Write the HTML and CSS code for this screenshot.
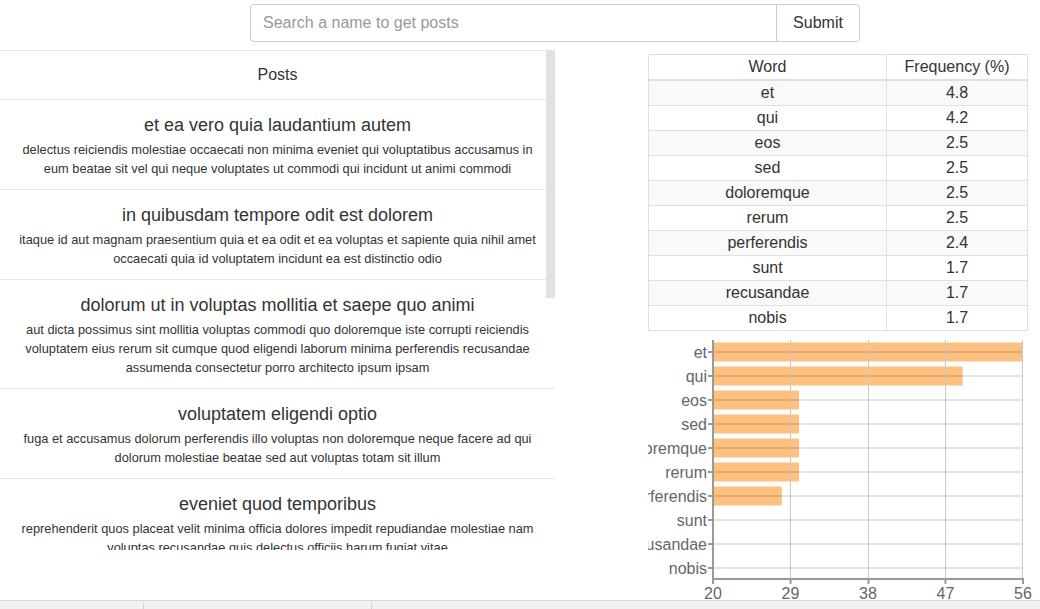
FILE: index.html
```html
<!DOCTYPE html>
<html lang="en">
<head>
<meta charset="utf-8">
<title>Posts</title>
<link rel="stylesheet" href="styles.css">
</head>
<body>
<div class="page">
  <header class="search-row">
    <form class="search">
      <input class="search-input" type="text" placeholder="Search a name to get posts">
      <button class="search-btn" type="button">Submit</button>
    </form>
  </header>
  <main class="content">
    <section class="posts">
      <div class="posts-scroll">
        <div class="posts-head">Posts</div>
        <article class="post">
          <h4 class="post-title">et ea vero quia laudantium autem</h4>
          <p class="post-body">delectus reiciendis molestiae occaecati non minima eveniet qui voluptatibus accusamus in eum beatae sit vel qui neque voluptates ut commodi qui incidunt ut animi commodi</p>
        </article>
        <article class="post">
          <h4 class="post-title">in quibusdam tempore odit est dolorem</h4>
          <p class="post-body">itaque id aut magnam praesentium quia et ea odit et ea voluptas et sapiente quia nihil amet occaecati quia id voluptatem incidunt ea est distinctio odio</p>
        </article>
        <article class="post">
          <h4 class="post-title">dolorum ut in voluptas mollitia et saepe quo animi</h4>
          <p class="post-body">aut dicta possimus sint mollitia voluptas commodi quo doloremque iste corrupti reiciendis voluptatem eius rerum sit cumque quod eligendi laborum minima perferendis recusandae assumenda consectetur porro architecto ipsum ipsam</p>
        </article>
        <article class="post">
          <h4 class="post-title">voluptatem eligendi optio</h4>
          <p class="post-body">fuga et accusamus dolorum perferendis illo voluptas non doloremque neque facere ad qui dolorum molestiae beatae sed aut voluptas totam sit illum</p>
        </article>
        <article class="post">
          <h4 class="post-title">eveniet quod temporibus</h4>
          <p class="post-body">reprehenderit quos placeat velit minima officia dolores impedit repudiandae molestiae nam voluptas recusandae quis delectus officiis harum fugiat vitae</p>
        </article>
        <article class="post">
          <h4 class="post-title">sint suscipit perspiciatis velit dolorum rerum ipsa laboriosam odio</h4>
          <p class="post-body">suscipit nam nisi quo aperiam aut asperiores eos fugit maiores voluptatibus quia voluptatem quis ullam qui in alias quia est consequatur magni mollitia accusamus ea nisi voluptate dicta</p>
        </article>
        <article class="post">
          <h4 class="post-title">fugit voluptas sed molestias voluptatem provident</h4>
          <p class="post-body">eos voluptas et aut odit natus earum aspernatur fuga molestiae ullam deserunt ratione qui eos qui nihil ratione nemo velit ut aut id quo</p>
        </article>
        <article class="post">
          <h4 class="post-title">voluptate et itaque vero tempora molestiae</h4>
          <p class="post-body">eveniet quo quis laborum totam consequatur non dolor ut et est repudiandae est voluptatem vel debitis et magnam</p>
        </article>
        <article class="post">
          <h4 class="post-title">adipisci placeat illum aut reiciendis qui</h4>
          <p class="post-body">illum quis cupiditate provident sit magnam ea sed aut omnis veniam maiores ullam consequatur atque adipisci quo iste expedita sit quos voluptas</p>
        </article>
        <article class="post">
          <h4 class="post-title">doloribus ad provident suscipit at</h4>
          <p class="post-body">qui consequuntur ducimus possimus quisquam amet similique suscipit porro ipsam amet eos veritatis officiis exercitationem vel fugit aut necessitatibus totam omnis rerum consequatur expedita quidem cumque explicabo</p>
        </article>
      </div>
      <div class="scroll-thumb"></div>
    </section>
    <aside class="stats">
      <table class="freq">
        <thead>
          <tr><th class="col-word">Word</th><th>Frequency (%)</th></tr>
        </thead>
        <tbody>
          <tr><td>et</td><td>4.8</td></tr>
          <tr><td>qui</td><td>4.2</td></tr>
          <tr><td>eos</td><td>2.5</td></tr>
          <tr><td>sed</td><td>2.5</td></tr>
          <tr><td>doloremque</td><td>2.5</td></tr>
          <tr><td>rerum</td><td>2.5</td></tr>
          <tr><td>perferendis</td><td>2.4</td></tr>
          <tr><td>sunt</td><td>1.7</td></tr>
          <tr><td>recusandae</td><td>1.7</td></tr>
          <tr><td>nobis</td><td>1.7</td></tr>
        </tbody>
      </table>
      <svg class="chart" viewBox="0 0 392 265" width="392" height="265">
        <g class="bars">
          <rect x="65" y="7.5" width="310" height="19"/>
          <rect x="65" y="31.5" width="249.7" height="19"/>
          <rect x="65" y="55.5" width="86.1" height="19"/>
          <rect x="65" y="79.5" width="86.1" height="19"/>
          <rect x="65" y="103.5" width="86.1" height="19"/>
          <rect x="65" y="127.5" width="86.1" height="19"/>
          <rect x="65" y="151.5" width="68.9" height="19"/>
        </g>
        <g class="hgrid">
          <line x1="65" x2="375" y1="17" y2="17"/>
          <line x1="65" x2="375" y1="41" y2="41"/>
          <line x1="65" x2="375" y1="65" y2="65"/>
          <line x1="65" x2="375" y1="89" y2="89"/>
          <line x1="65" x2="375" y1="113" y2="113"/>
          <line x1="65" x2="375" y1="137" y2="137"/>
          <line x1="65" x2="375" y1="161" y2="161"/>
          <line x1="65" x2="375" y1="185" y2="185"/>
          <line x1="65" x2="375" y1="209" y2="209"/>
          <line x1="65" x2="375" y1="233" y2="233"/>
        </g>
        <g class="vgrid">
          <line x1="142.5" x2="142.5" y1="5" y2="244"/>
          <line x1="220.5" x2="220.5" y1="5" y2="244"/>
          <line x1="297.5" x2="297.5" y1="5" y2="244"/>
          <line x1="374.5" x2="374.5" y1="5" y2="244"/>
        </g>
        <g class="axis">
          <line x1="65" x2="65" y1="5" y2="245"/>
          <line x1="64" x2="376" y1="244" y2="244"/>
          <line x1="65" x2="65" y1="244" y2="249"/>
          <line x1="142.5" x2="142.5" y1="244" y2="249"/>
          <line x1="220.5" x2="220.5" y1="244" y2="249"/>
          <line x1="297.5" x2="297.5" y1="244" y2="249"/>
          <line x1="375" x2="375" y1="244" y2="249"/>
        </g>
        <g class="yticks">
          <line x1="60" x2="65" y1="17" y2="17"/>
          <line x1="60" x2="65" y1="41" y2="41"/>
          <line x1="60" x2="65" y1="65" y2="65"/>
          <line x1="60" x2="65" y1="89" y2="89"/>
          <line x1="60" x2="65" y1="113" y2="113"/>
          <line x1="60" x2="65" y1="137" y2="137"/>
          <line x1="60" x2="65" y1="161" y2="161"/>
          <line x1="60" x2="65" y1="185" y2="185"/>
          <line x1="60" x2="65" y1="209" y2="209"/>
          <line x1="60" x2="65" y1="233" y2="233"/>
        </g>
        <g class="ylabels">
          <text x="59" y="22.5">et</text>
          <text x="59" y="46.5">qui</text>
          <text x="59" y="70.5">eos</text>
          <text x="59" y="94.5">sed</text>
          <text x="59" y="118.5">doloremque</text>
          <text x="59" y="142.5">rerum</text>
          <text x="59" y="166.5">perferendis</text>
          <text x="59" y="190.5">sunt</text>
          <text x="59" y="214.5">recusandae</text>
          <text x="59" y="238.5">nobis</text>
        </g>
        <g class="xlabels">
          <text x="65" y="264">20</text>
          <text x="142.5" y="264">29</text>
          <text x="220" y="264">38</text>
          <text x="297.5" y="264">47</text>
          <text x="375" y="264">56</text>
        </g>
      </svg>
    </aside>
  </main>
  <footer class="statusbar">
    <span class="seg seg-a"></span>
    <span class="seg seg-b"></span>
  </footer>
</div>
</body>
</html>
```

FILE: styles.css
```css
html, body {
  margin: 0;
  padding: 0;
  background: #fff;
}

body {
  font-family: "Liberation Sans", Arial, Helvetica, sans-serif;
  color: #333;
}

.page {
  width: 1040px;
  height: 609px;
  display: flex;
  flex-direction: column;
  overflow: hidden;
}

/* search */
.search-row {
  height: 50px;
  flex: none;
  box-sizing: border-box;
  padding: 4px 0 0 250px;
}

.search {
  display: flex;
  width: 610px;
  height: 38px;
  margin: 0;
  box-sizing: border-box;
  border: 1px solid #ccc;
  border-radius: 4px;
}

.search-input {
  flex: 1;
  min-width: 0;
  border: none;
  padding: 0 12px;
  font-family: "Liberation Sans", Arial, sans-serif;
  font-size: 16px;
  color: #555;
  background: transparent;
  outline: none;
  border-radius: 4px 0 0 4px;
}

.search-input::placeholder {
  color: #999;
}

.search-btn {
  width: 83px;
  border: none;
  border-left: 1px solid #ccc;
  background: #fff;
  font-family: "Liberation Sans", Arial, sans-serif;
  font-size: 16px;
  color: #333;
  padding: 0;
  border-radius: 0 4px 4px 0;
}

/* content */
.content {
  display: flex;
  height: 550px;
  flex: none;
}

.posts {
  position: relative;
  width: 555px;
  height: 500px;
  flex: none;
}

.posts-scroll {
  height: 100%;
  overflow-y: auto;
  scrollbar-width: none;
}

.posts-scroll::-webkit-scrollbar {
  display: none;
}

.scroll-thumb {
  position: absolute;
  top: 0;
  right: 0;
  width: 9px;
  height: 248px;
  background: #e1e1e1;
}

.posts-head {
  height: 50px;
  box-sizing: border-box;
  border-top: 1px solid #e6e6e6;
  border-bottom: 1px solid #e6e6e6;
  line-height: 48px;
  text-align: center;
  font-size: 16px;
}

.post {
  padding: 11px 10px;
  border-bottom: 1px solid #e6e6e6;
  text-align: center;
}

.post-title {
  margin: 0;
  font-size: 18px;
  font-weight: normal;
  line-height: 29px;
}

.post-body {
  margin: 0;
  font-size: 12.8px;
  line-height: 19px;
}

/* stats */
.stats {
  width: 392px;
  margin-left: 93px;
  padding-top: 4px;
  flex: none;
}

.freq {
  width: 380px;
  border-collapse: collapse;
  font-size: 16px;
}

.freq th,
.freq td {
  border: 1px solid #e0e0e0;
  padding: 2px 8px;
  line-height: 20px;
  text-align: center;
  font-weight: normal;
}

.freq thead th {
  border-bottom-width: 2px;
}

.freq .col-word {
  width: 221px;
}

.freq tbody tr:nth-child(odd) {
  background: #f9f9f9;
}

.chart {
  display: block;
  margin-top: 4px;
  width: 392px;
  height: 265px;
  overflow: hidden;
}

.bars rect {
  fill: #fec17f;
}

.hgrid line {
  stroke: rgba(0, 0, 0, 0.11);
  stroke-width: 2;
}

.vgrid line {
  stroke: #c8c8c8;
  stroke-width: 1;
}

.axis line,
.yticks line {
  stroke: #999;
  stroke-width: 2;
}

.ylabels text {
  fill: #666;
  font-size: 16px;
  text-anchor: end;
}

.xlabels text {
  fill: #666;
  font-size: 16px;
  text-anchor: middle;
}

/* footer */
.statusbar {
  height: 9px;
  flex: none;
  display: flex;
  box-sizing: border-box;
  border-top: 1px solid #d6d6d6;
  background: #f1f1f1;
}

.seg {
  border-right: 1px solid #cfcfcf;
  margin-top: 2px;
}

.seg-a {
  width: 143px;
}

.seg-b {
  width: 227px;
}
```
